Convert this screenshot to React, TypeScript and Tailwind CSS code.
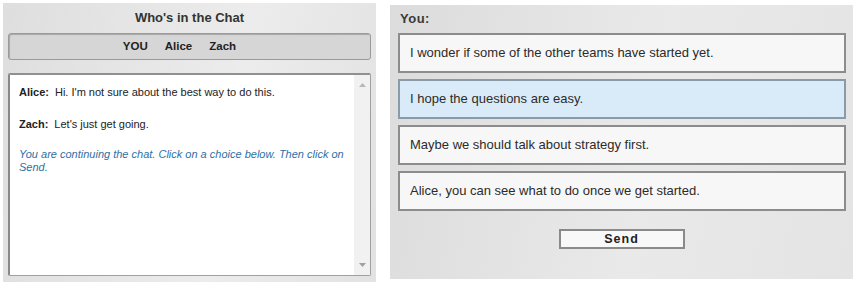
export default function App() {
  const options = [
    "I wonder if some of the other teams have started yet.",
    "I hope the questions are easy.",
    "Maybe we should talk about strategy first.",
    "Alice, you can see what to do once we get started.",
  ];
  return (
    <div className="w-[858px] h-[289px] bg-white flex pl-[3px] pt-[3px] gap-[14px]" style={{ fontFamily: '"Liberation Sans", Arial, sans-serif' }}>
      <div className="w-[373px] h-[279px] bg-[linear-gradient(100deg,#dedede,#ececec_60%,#e2e2e2)] flex flex-col px-[5px]">
        <div className="h-[30px] flex items-center justify-center text-[13px] font-bold text-[#333]">Who's in the Chat</div>
        <div className="h-[27px] rounded-[3px] border border-[#9a9a9a] bg-[#d6d6d6] shadow-[inset_1px_1px_1px_#a8a8a8] flex items-center justify-center gap-[17px] pr-[20px] text-[11.5px] font-bold text-[#222]">
          <span>YOU</span>
          <span>Alice</span>
          <span>Zach</span>
        </div>
        <div className="mt-[13px] h-[203px] rounded-[2px] border border-[#a0a0a0] border-l-2 border-l-[#888] border-t-2 border-t-[#909090] bg-white flex">
          <div className="flex-1 pl-[9px] pt-[9px] text-[11px] text-[#222]">
            <div className="flex gap-[6px]"><span className="font-bold">Alice:</span><span>Hi. I'm not sure about the best way to do this.</span></div>
            <div className="flex gap-[6px] mt-[15px]"><span className="font-bold">Zach:</span><span>Let's just get going.</span></div>
            <div className="mt-[16px] italic text-[#2f6fa3] leading-[13px] pr-[6px]">You are continuing the chat. Click on a choice below. Then click on Send.</div>
          </div>
          <div className="w-[16px] bg-[#f1f1f1] flex flex-col items-center justify-between py-[8px]">
            <svg width="7" height="4" viewBox="0 0 7 4"><path d="M0 4 L3.5 0 L7 4 Z" fill="#b8b8b8" /></svg>
            <svg width="7" height="4" viewBox="0 0 7 4"><path d="M0 0 L3.5 4 L7 0 Z" fill="#a0a0a0" /></svg>
          </div>
        </div>
      </div>
      <div className="mt-[2px] w-[463px] h-[274px] bg-[linear-gradient(100deg,#dcdcdc,#e9e9e9_55%,#e4e4e4)] flex flex-col px-[8px]">
        <div className="h-[28px] pl-[2px] flex items-center text-[13px] font-bold text-[#3a3a3a] tracking-[0.5px]">You:</div>
        <div className="flex flex-col gap-[6px] mr-[-1px]">
          {options.map((o, i) => (
            <div
              key={i}
              className={
                i === 1
                  ? "h-[40px] border-2 border-[#8a9aa8] bg-[#d9ebf9] flex items-center pl-[10px] text-[13px] text-[#2b2b2b]"
                  : "h-[40px] border-2 border-[#8c8c8c] bg-[#f7f7f7] flex items-center pl-[10px] text-[13px] text-[#2b2b2b]"
              }
            >
              {o}
            </div>
          ))}
        </div>
        <div className="flex justify-center mt-[18px]">
          <button className="w-[126px] h-[20px] border-2 border-[#8a8a8a] bg-[#f8f8f8] text-[12.5px] font-bold text-[#222] tracking-[1px] flex items-center justify-center leading-none">Send</button>
        </div>
      </div>
    </div>
  );
}
